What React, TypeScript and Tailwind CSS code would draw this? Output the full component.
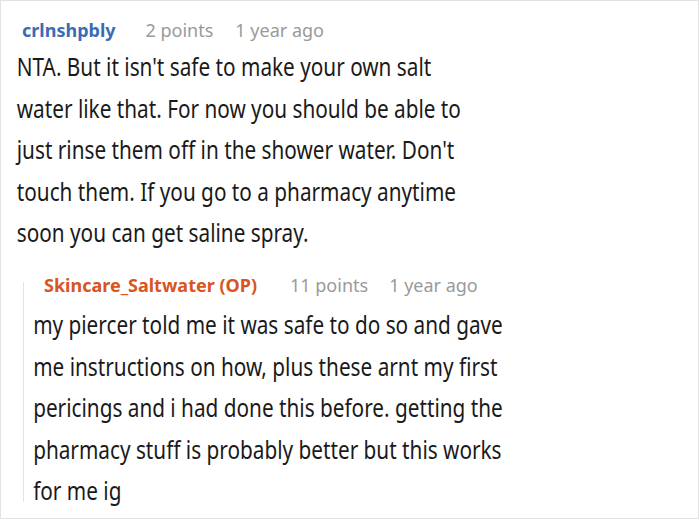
const bodyText = 'origin-left scale-x-[0.83] whitespace-nowrap text-[25px] leading-[41.6px] text-[#1a1a1a]'

export default function App() {
  return (
    <div
      className="w-[699px] h-[519px] bg-white border border-[#e3e3e3] overflow-hidden"
      style={{ fontFamily: '"Noto Sans", sans-serif' }}
    >
      <div className="pl-[21px] pt-[17px]">
        <div className="flex items-center text-[18px] leading-[24px]">
          <span className="font-bold text-[#3a6bb5]">crlnshpbly</span>
          <span className="ml-[30px] text-[#9a9a9a]">2 points</span>
          <span className="ml-[22px] text-[#9a9a9a]">1 year ago</span>
        </div>
      </div>
      <p className={`pl-[19px] mt-[4px] ${bodyText}`}>
        NTA. But it isn't safe to make your own salt
        <br />
        water like that. For now you should be able to
        <br />
        just rinse them off in the shower water. Don't
        <br />
        touch them. If you go to a pharmacy anytime
        <br />
        soon you can get saline spray.
      </p>
      <div className="flex ml-[22px] mt-[19px]">
        <div className="w-px mt-[9px] mb-[10px] bg-[#e3e3e3]" />
        <div className="flex-1">
          <div className="pl-[20px] flex items-center text-[18px] leading-[24px]">
            <span className="font-bold text-[#d9541e]">Skincare_Saltwater (OP)</span>
            <span className="ml-[33px] text-[#9a9a9a]">11 points</span>
            <span className="ml-[21px] text-[#9a9a9a]">1 year ago</span>
          </div>
          <p className={`pl-[11px] mt-[7px] ${bodyText}`}>
            my piercer told me it was safe to do so and gave
            <br />
            me instructions on how, plus these arnt my first
            <br />
            pericings and i had done this before. getting the
            <br />
            pharmacy stuff is probably better but this works
            <br />
            for me ig
          </p>
        </div>
      </div>
    </div>
  )
}
